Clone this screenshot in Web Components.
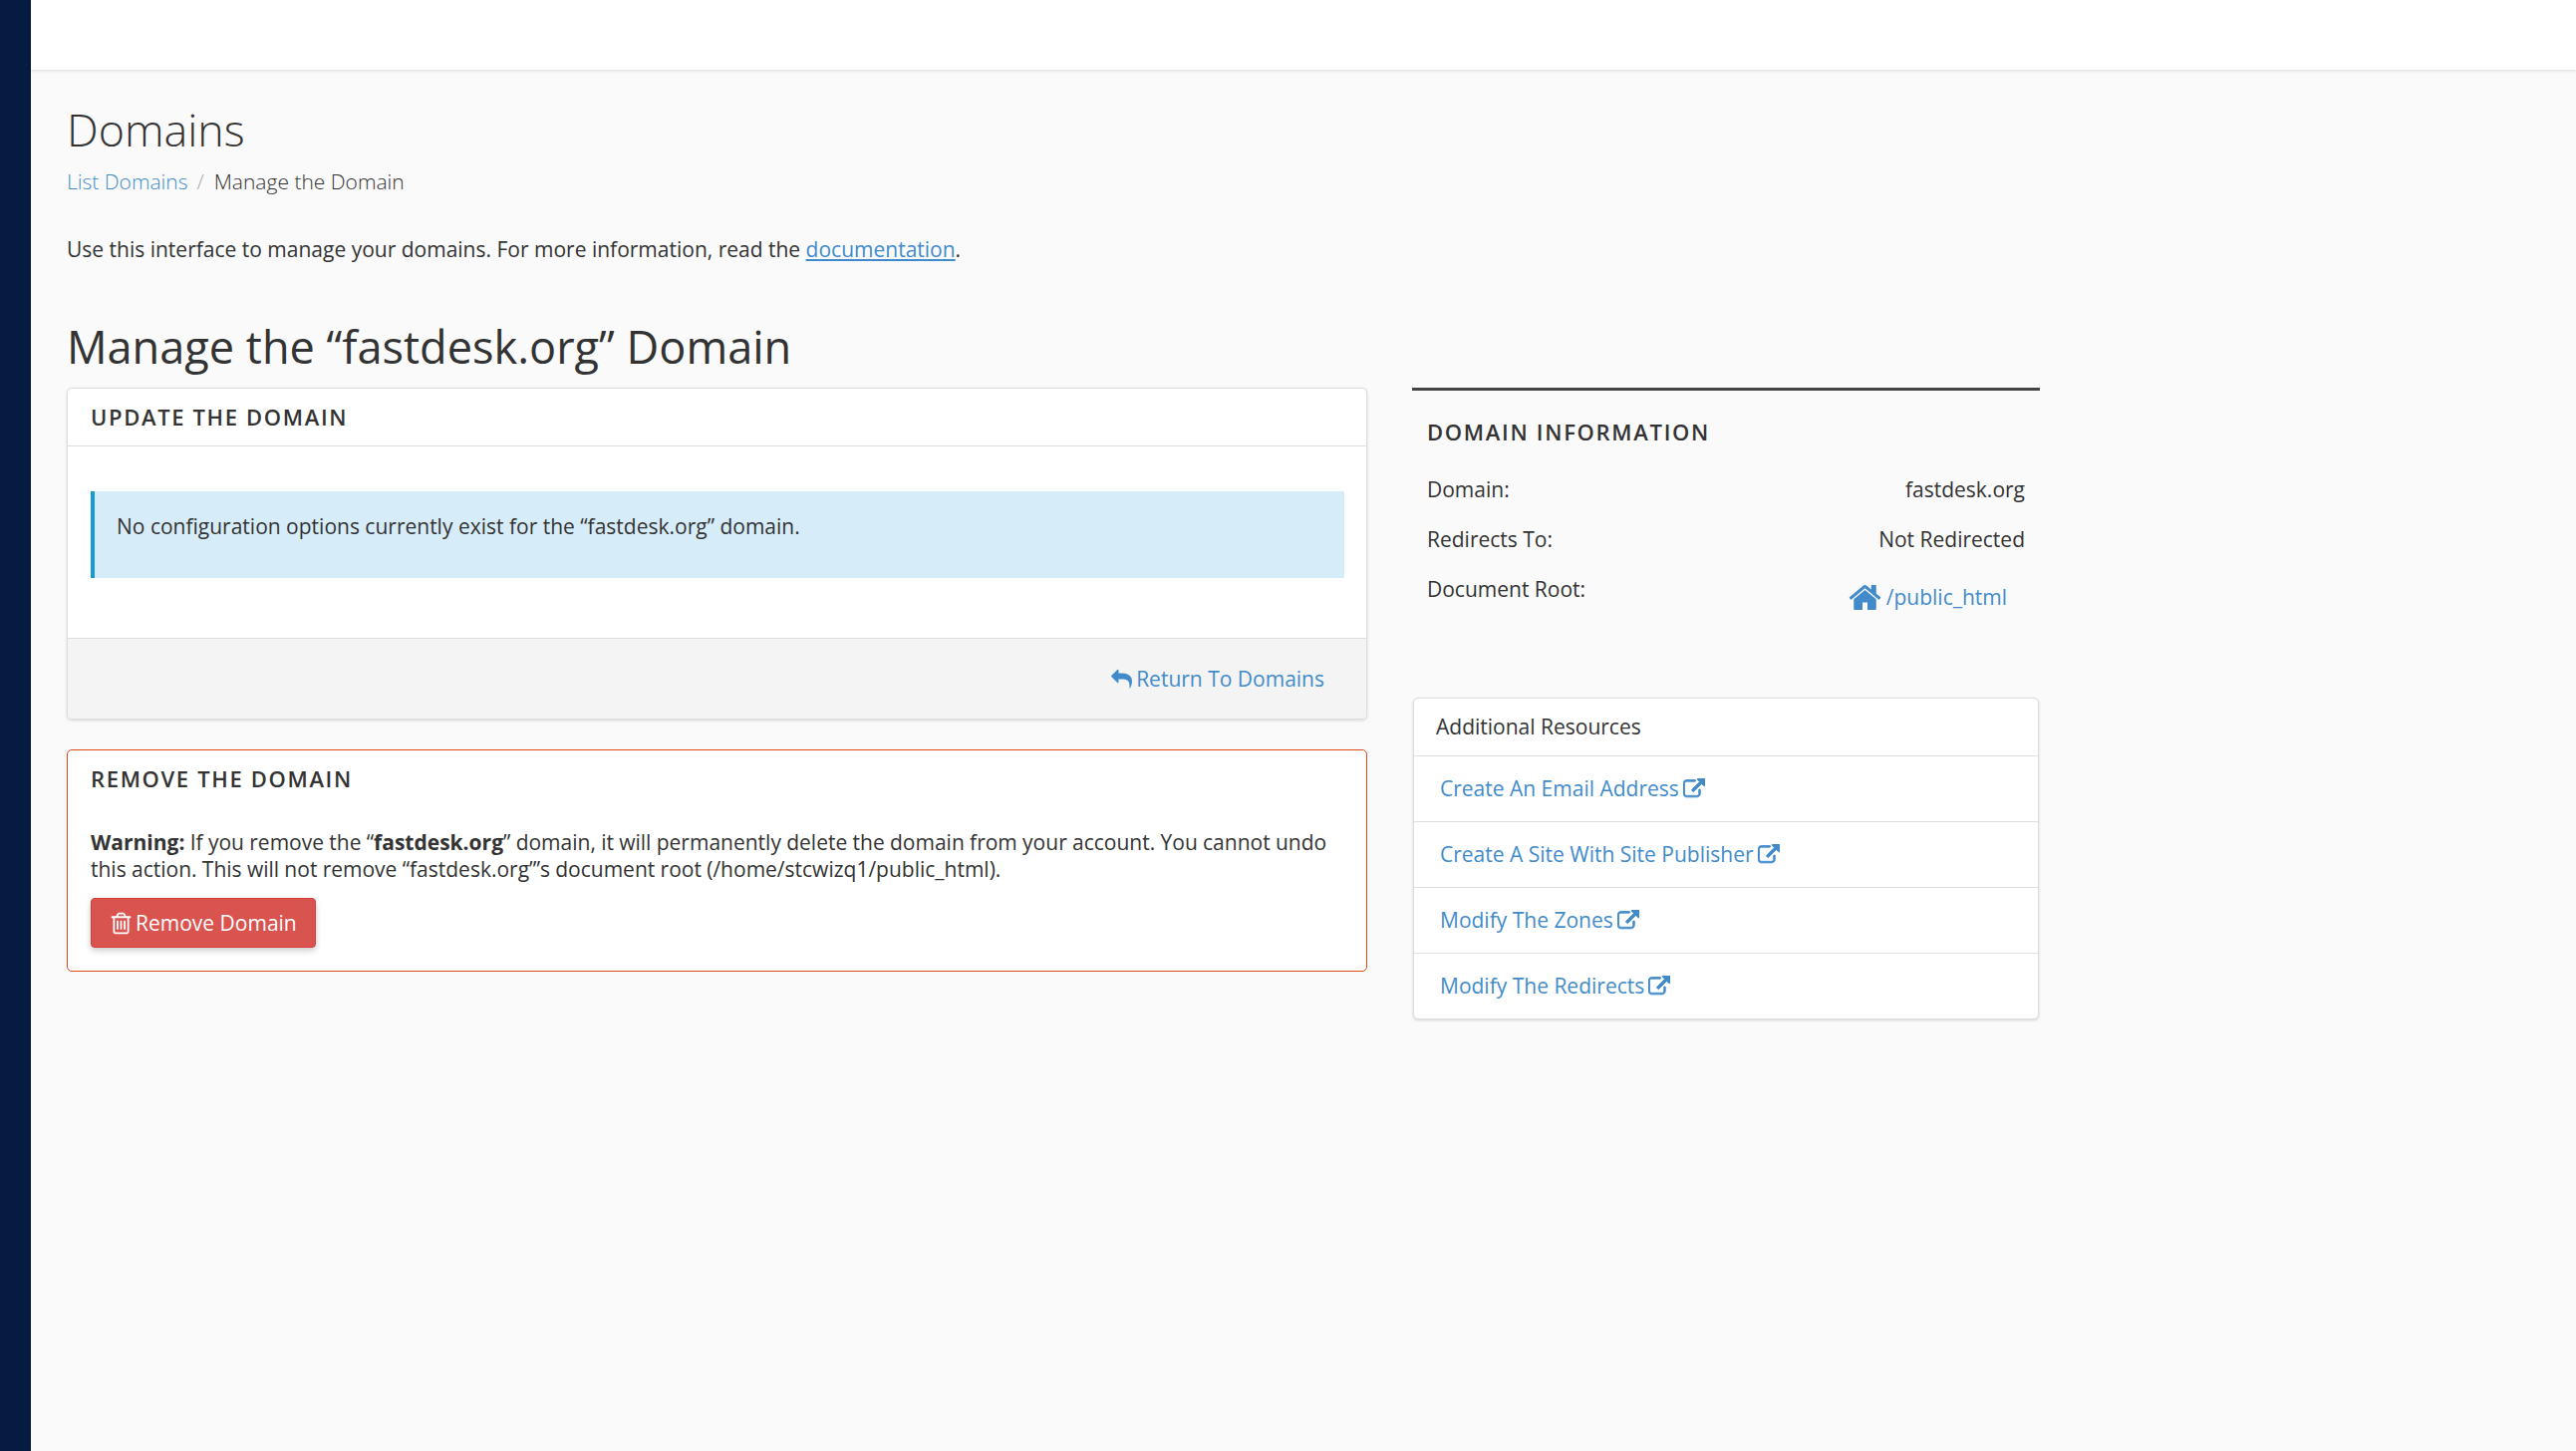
<!DOCTYPE html>
<html lang="en">
<head>
<meta charset="utf-8">
<title>Domains</title>
<style>
  html, body { margin: 0; height: 100%; }
  body {
    background: #fafafa;
    color: #333;
    font-family: "Open Sans", "Liberation Sans", sans-serif;
    font-size: 21px;
    line-height: 27px;
    overflow: hidden;
  }
  a { color: #428bca; text-decoration: none; }
  page-intro a { text-decoration: underline; }
</style>
</head>
<body>
<template id="icons">
  <svg data-name="home" viewBox="0 0 1792 1792" fill="currentColor"><path d="M1472 992v480q0 26-19 45t-45 19h-384v-384h-256v384h-384q-26 0-45-19t-19-45v-480q0-1 .5-3t.5-3l575-474 575 474q1 2 1 6zm223-69l-62 74q-8 9-21 11h-3q-13 0-21-7l-692-577-692 577q-12 8-24 7-13-2-21-11l-62-74q-8-10-7-23.500t11-21.500l719-599q32-26 76-26t76 26l244 204v-195q0-14 9-23t23-9h192q14 0 23 9t9 23v408l219 182q10 8 11 21.500t-7 23.500z"/></svg>
  <svg data-name="reply" viewBox="0 0 1792 1792" fill="currentColor"><path d="M1792 1120q0 166-127 451-3 7-10.500 24t-13.500 30-13 22q-12 17-28 17-15 0-23.500-10t-8.500-25q0-9 2.500-26.500t2.500-23.500q5-68 5-123 0-101-17.500-181t-48.500-138.500-80-101-105.500-69.500-133-42.500-154-21.500-175.500-6h-224v256q0 26-19 45t-45 19-45-19l-512-512q-19-19-19-45t19-45l512-512q19-19 45-19t45 19 19 45v256h224q713 0 875 403 53 134 53 333z"/></svg>
  <svg data-name="external" viewBox="0 0 1792 1792" fill="currentColor" stroke="currentColor" stroke-width="70"><path d="M1408 928v320q0 119-84.500 203.500t-203.500 84.500h-832q-119 0-203.500-84.500t-84.500-203.500v-832q0-119 84.500-203.500t203.500-84.500h704q14 0 23 9t9 23v64q0 14-9 23t-23 9h-704q-66 0-113 47t-47 113v832q0 66 47 113t113 47h832q66 0 113-47t47-113v-320q0-14 9-23t23-9h64q14 0 23 9t9 23zm384-864v512q0 26-19 45t-45 19-45-19l-176-176-652 652q-10 10-23 10t-23-10l-114-114q-10-10-10-23t10-23l652-652-176-176q-19-19-19-45t19-45 45-19h512q26 0 45 19t19 45z"/></svg>
  <svg data-name="trash" viewBox="0 0 1792 1792" fill="currentColor"><path d="M704 736v576q0 14-9 23t-23 9h-64q-14 0-23-9t-9-23v-576q0-14 9-23t23-9h64q14 0 23 9t9 23zm256 0v576q0 14-9 23t-23 9h-64q-14 0-23-9t-9-23v-576q0-14 9-23t23-9h64q14 0 23 9t9 23zm256 0v576q0 14-9 23t-23 9h-64q-14 0-23-9t-9-23v-576q0-14 9-23t23-9h64q14 0 23 9t9 23zm128 724v-948h-896v948q0 22 7 40.500t14.500 27 10.500 8.500h832q3 0 10.500-8.500t14.500-27 7-40.500zm-672-1076h448l-48-117q-7-9-17-11h-317q-10 2-17 11zm928 32v64q0 14-9 23t-23 9h-96v948q0 83-47 143.500t-113 60.500h-832q-66 0-113-58.500t-47-141.500v-952h-96q-14 0-23-9t-9-23v-64q0-14 9-23t23-9h309l70-167q15-37 54-63t79-26h320q40 0 79 26t54 63l70 167h309q14 0 23 9t9 23z"/></svg>
</template>

<app-frame>
  <page-head>
    <span slot="title">Domains</span>
    <a slot="crumb" href="#">List Domains</a>
    <span slot="current">Manage the Domain</span>
  </page-head>
  <page-intro>Use this interface to manage your domains. For more information, read the <a href="#">documentation</a>.</page-intro>
  <page-title>Manage the “fastdesk.org” Domain</page-title>
  <two-columns>
    <div>
      <update-card></update-card>
      <remove-card></remove-card>
    </div>
    <div slot="side">
      <domain-info></domain-info>
      <resource-list>
        <resource-link>Create An Email Address</resource-link>
        <resource-link>Create A Site With Site Publisher</resource-link>
        <resource-link>Modify The Zones</resource-link>
        <resource-link>Modify The Redirects</resource-link>
      </resource-list>
    </div>
  </two-columns>
</app-frame>

<script>
// icons live in one template, cloned by name
function icon(name) {
  return document.getElementById('icons').content.querySelector(`[data-name="${name}"]`).outerHTML;
}

function define(tag, html) {
  customElements.define(tag, class extends HTMLElement {
    connectedCallback() {
      this.attachShadow({ mode: 'open' });
      this.shadowRoot.innerHTML = html;
    }
  });
}

const linkStyle = `a { color: #428bca; text-decoration: none; }`;

define('app-frame', `
  <style>
    :host { display: flex; height: 1456px; }
    .rail { width: 31px; flex: none; background: #051b40; }
    .main { flex: 1; min-width: 0; }
    .top { height: 70px; background: #fff; box-shadow: 0 1px 4px rgba(0,0,0,.13); }
    .content { padding: 0 36px; }
  </style>
  <div class="rail"></div>
  <div class="main">
    <div class="top"></div>
    <div class="content"><slot></slot></div>
  </div>
`);

define('page-head', `
  <style>
    :host { display: block; padding-top: 33px; }
    h1 { margin: 0; font-size: 44.8px; line-height: 54px; font-weight: 300; color: #333; }
    .crumbs { margin-top: 12px; display: flex; font-weight: 300; height: 27px; }
    .sep { color: #aaa; padding: 0 9px 0 9px; margin-right: 1px; }
  </style>
  <h1><slot name="title"></slot></h1>
  <div class="crumbs"><slot name="crumb"></slot><span class="sep">/</span><slot name="current"></slot></div>
`);

define('page-intro', `
  <style>
    :host { display: block; margin-top: 41px; }
  </style>
  <slot></slot>
`);

define('page-title', `
  <style>
    :host { display: block; margin-top: 55px; font-size: 45.1px; line-height: 58px; font-weight: 400; color: #333; }
  </style>
  <slot></slot>
`);

define('two-columns', `
  <style>
    :host { display: grid; grid-template-columns: 1305px 630px; column-gap: 45px; margin-top: 12px; }
  </style>
  <slot></slot><slot name="side"></slot>
`);

define('update-card', `
  <style>
    :host { display: block; background: #fff; border: 1px solid #ddd; border-radius: 5px; box-shadow: 0 1px 3px rgba(0,0,0,.15); overflow: hidden; }
    h2 { margin: 0; padding: 15px 23px 16px; height: 26px; line-height: 26px; font-size: 22px; font-weight: 600; letter-spacing: 1.65px; border-bottom: 1px solid #ddd; }
    .body { padding: 45px 22px 60px 23px; }
    .alert { height: 87px; box-sizing: border-box; background: #d6ecf9; border-left: 4px solid #179bd7; padding: 22px 22px 0; }
    .foot { background: #f4f4f4; border-top: 1px solid #ddd; height: 80px; display: flex; justify-content: flex-end; align-items: center; padding-right: 42px; }
    a { display: flex; align-items: center; color: #428bca; text-decoration: none; }
    svg { width: 21px; height: 21px; margin-right: 4px; }
  </style>
  <h2>UPDATE THE DOMAIN</h2>
  <div class="body"><div class="alert">No configuration options currently exist for the “fastdesk.org” domain.</div></div>
  <div class="foot"><a href="#">${icon('reply')}Return To Domains</a></div>
`);

define('remove-card', `
  <style>
    :host { display: block; margin-top: 30px; background: #fff; border: 1px solid #dd4814; border-radius: 5px; padding: 15px 23px 23px; }
    h2 { margin: 0 0 37px; line-height: 27px; font-size: 22px; font-weight: 600; letter-spacing: 1.65px; }
    p { margin: 0; word-spacing: -.15px; }
    button {
      display: flex; align-items: center; margin-top: 15px; width: 226px; height: 50px; box-sizing: border-box; padding: 0 0 0 17px;
      background: #d9534f; border: 1px solid #d43f3a; border-radius: 4px; color: #fff;
      font: inherit; box-shadow: 0 3px 6px rgba(0,0,0,.2);
    }
    svg { width: 25px; height: 25px; margin-right: 2px; }
  </style>
  <h2>REMOVE THE DOMAIN</h2>
  <p><b>Warning:</b> If you remove the “<b>fastdesk.org</b>” domain, it will permanently delete the domain from your account. You cannot undo<br>this action. This will not remove “fastdesk.org”’s document root (/home/stcwizq1/public_html).</p>
  <button>${icon('trash')}Remove Domain</button>
`);

define('domain-info', `
  <style>
    ${linkStyle}
    :host { display: block; border-top: 3px solid #444; padding: 28px 15px 0 15px; height: 311px; box-sizing: border-box; }
    h3 { margin: 0 0 28px; font-size: 22px; line-height: 27px; font-weight: 600; letter-spacing: 1.7px; }
    .row { display: flex; justify-content: space-between; height: 50px; padding-top: 3px; box-sizing: border-box; }
    .root { padding-right: 18px; padding-top: 8px; display: flex; align-items: center; height: 27px; }
    svg { width: 35px; height: 35px; margin-right: 4px; }
  </style>
  <h3>DOMAIN INFORMATION</h3>
  <div class="row"><span>Domain:</span><span>fastdesk.org</span></div>
  <div class="row"><span>Redirects To:</span><span>Not Redirected</span></div>
  <div class="row"><span>Document Root:</span><a class="root" href="#">${icon('home')}/public_html</a></div>
`);

define('resource-list', `
  <style>
    :host { display: block; margin: 0 1px; background: #fff; border: 1px solid #ddd; border-radius: 5px; box-shadow: 0 1px 3px rgba(0,0,0,.15); overflow: hidden; }
    .head { height: 57px; box-sizing: border-box; padding: 15px 22px; }
  </style>
  <div class="head">Additional Resources</div>
  <slot></slot>
`);

define('resource-link', `
  <style>
    ${linkStyle}
    :host { display: flex; align-items: center; height: 66px; box-sizing: border-box; border-top: 1px solid #ddd; padding-left: 26px; }
    a { display: flex; align-items: center; }
    svg { width: 22px; height: 22px; margin-left: 4px; }
  </style>
  <a href="#"><slot></slot>${icon('external')}</a>
`);
</script>
</body>
</html>
